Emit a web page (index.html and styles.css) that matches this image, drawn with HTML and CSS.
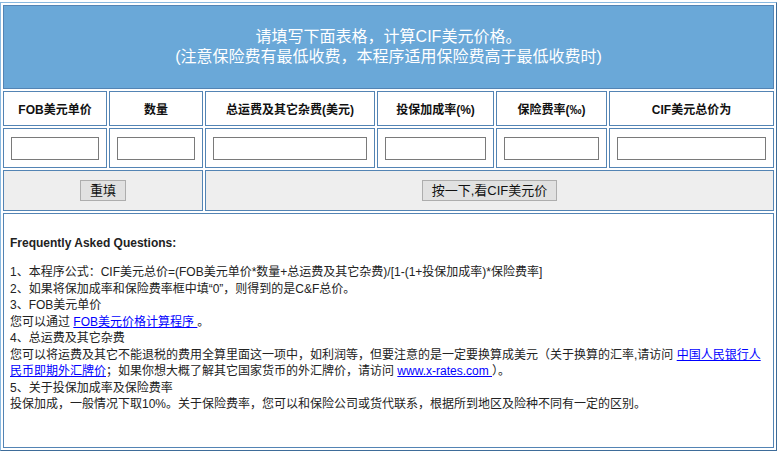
FILE: index.html
```html
<!DOCTYPE html>
<html lang="zh-CN">
    <head>
        <meta charset="utf-8">
        <title>CIF美元价格计算</title>
        <meta name="viewport" content="width=device-width, initial-scale=1">
        <link rel="stylesheet" href="styles.css">
    </head>
    <body>

        <form class="calc-form">
        <table class="calc">
            <colgroup>
                <col style="width: 104px">
                <col style="width: 94px">
                <col style="width: 170px">
                <col style="width: 117px">
                <col style="width: 111px">
                <col>
            </colgroup>
            <tr>
                <td class="calc__title" colspan="6">
                    请填写下面表格，计算CIF美元价格。<br>
                    (注意保险费有最低收费，本程序适用保险费高于最低收费时)
                </td>
            </tr>
            <tr class="calc__head">
                <th>FOB美元单价</th>
                <th>数量</th>
                <th>总运费及其它杂费(美元)</th>
                <th>投保加成率(%)</th>
                <th>保险费率(‰)</th>
                <th>CIF美元总价为</th>
            </tr>
            <tr class="calc__inputs">
                <td><input type="text" name="fob"></td>
                <td><input type="text" name="qty"></td>
                <td><input type="text" name="freight"></td>
                <td><input type="text" name="markup"></td>
                <td><input type="text" name="rate"></td>
                <td><input type="text" name="cif"></td>
            </tr>
            <tr class="calc__actions">
                <td colspan="2"><button type="reset" class="btn btn--reset">重填</button></td>
                <td colspan="4"><button type="button" class="btn btn--go">按一下,看CIF美元价</button></td>
            </tr>
            <tr>
                <td class="faq" colspan="6">
                    <div class="faq__title">Frequently Asked Questions:</div>
                    <p>1、本程序公式：CIF美元总价=(FOB美元单价*数量+总运费及其它杂费)/[1-(1+投保加成率)*保险费率]</p>
                    <p>2、如果将保加成率和保险费率框中填“0”，则得到的是C&amp;F总价。</p>
                    <p>3、FOB美元单价</p>
                    <p>您可以通过 <a href="#">FOB美元价格计算程序 </a>。</p>
                    <p>4、总运费及其它杂费</p>
                    <p>您可以将运费及其它不能退税的费用全算里面这一项中，如利润等，但要注意的是一定要换算成美元（关于换算的汇率,请访问 <a href="#">中国人民银行人民币即期外汇牌价</a>；如果你想大概了解其它国家货币的外汇牌价，请访问 <a href="#">www.x-rates.com </a>）。</p>
                    <p>5、关于投保加成率及保险费率</p>
                    <p>投保加成，一般情况下取10%。关于保险费率，您可以和保险公司或货代联系，根据所到地区及险种不同有一定的区别。</p>
                </td>
            </tr>
        </table>
        </form>

    </body>
</html>
```

FILE: styles.css
```css
* {
    box-sizing: border-box;
}

body {
    margin: 2px 0 0 0;
    font-family: "Liberation Sans", "Noto Sans CJK SC", sans-serif;
    font-size: 12px;
    color: #222;
    background: #fff;
}

.calc-form {
    margin: 0;
}

.calc {
    width: 777px;
    table-layout: fixed;
    border-collapse: separate;
    border-spacing: 2px;
    border: 1px solid;
    border-color: #8ab9e0 #3e6c99 #3e6c99 #8ab9e0;
}

.calc td,
.calc th {
    border: 1px solid #5384b4;
    padding: 0;
}

.calc__title {
    height: 84px;
    background-color: #6aa8d8;
    color: #fff;
    font-size: 16px;
    line-height: 20px;
    text-align: center;
    vertical-align: middle;
}

.calc__head th {
    height: 35px;
    font-size: 12px;
    font-weight: bold;
    text-align: center;
    color: #111;
}

.calc__inputs td {
    height: 40px;
    padding: 0 7px;
    vertical-align: middle;
}

.calc__inputs input {
    display: block;
    width: 100%;
    height: 23px;
    margin: 0;
    border: 1px solid #7a7a7a;
    background: #fff;
    font: 12px "Liberation Sans", sans-serif;
}

.calc__actions td {
    height: 41px;
    background-color: #eeeeee;
    text-align: center;
    vertical-align: middle;
}

.btn {
    height: 21px;
    padding: 0;
    border: 1px solid #adadad;
    background-color: #e1e1e1;
    color: #111;
    font-family: "Liberation Sans", "Noto Sans CJK SC", sans-serif;
    font-size: 13px;
    line-height: 18px;
}

.btn--reset {
    width: 46px;
}

.btn--go {
    width: 135px;
}

.faq {
    height: 235px;
    padding: 21px 8px 0 6px !important;
    vertical-align: top;
    line-height: 16.5px;
}

.faq__title {
    font-weight: bold;
    margin-bottom: 12.5px;
}

.faq p {
    margin: 0;
}

.faq a {
    color: #0000ff;
}
```
